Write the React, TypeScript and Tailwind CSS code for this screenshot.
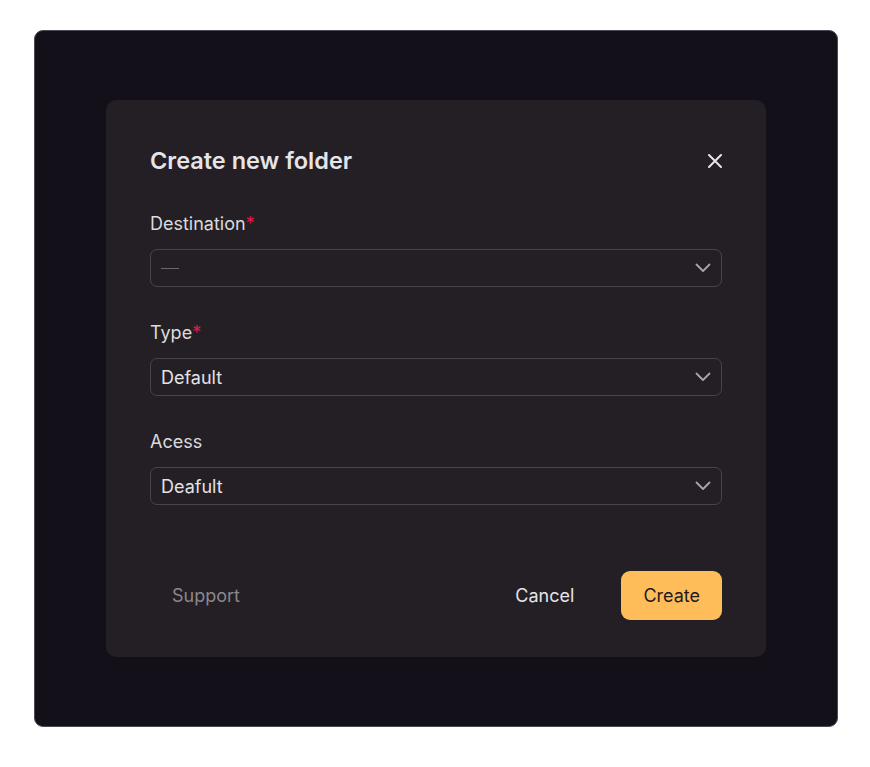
function Chevron() {
  return (
    <svg width="16" height="10" viewBox="0 0 16 10" fill="none" className="text-[#a9a6ab]">
      <path d="M1.5 1.5l6.5 6.5 6.5-6.5" stroke="currentColor" strokeWidth="1.8" strokeLinecap="round" strokeLinejoin="round" />
    </svg>
  );
}

function Field({ label, required, value, placeholder }: { label: string; required?: boolean; value?: string; placeholder?: boolean }) {
  return (
    <div className="flex flex-col gap-[12px]">
      <label className="text-[18px] leading-[26px] text-[#dcdadd]">
        {label}
        {required && <span className="text-[#e3174f]">*</span>}
      </label>
      <div className="flex h-[38px] items-center justify-between rounded-[7px] border border-[#48444c] pl-[10px] pr-[10px]">
        {placeholder ? (
          <span className="block h-px w-[18px] bg-[#6b676e]" />
        ) : (
          <span className="text-[18px] text-[#e4e2e5]">{value}</span>
        )}
        <Chevron />
      </div>
    </div>
  );
}

export default function App() {
  return (
    <div className="min-h-screen bg-white pt-[30px] pl-[34px] pr-[32px] font-['Inter',sans-serif]">
      <div className="flex h-[697px] items-start rounded-[9px] border border-[#4e4a55] bg-[#141019] px-[71px] pt-[69px]">
        <div className="w-full rounded-[10px] bg-[#231f25] px-[44px] pt-[47px] pb-[37px]">
          {/* Header */}
          <div className="flex items-center justify-between">
            <h2 className="text-[23.5px] font-semibold leading-7 text-[#e6e4e7]">Create new folder</h2>
            <svg width="14" height="14" viewBox="0 0 14 14" fill="none" className="text-[#e6e4e7]">
              <path d="M1 1l12 12M13 1L1 13" stroke="currentColor" strokeWidth="2" strokeLinecap="round" />
            </svg>
          </div>

          {/* Fields */}
          <div className="mt-[36px] flex flex-col gap-[33px]">
            <Field label="Destination" required placeholder />
            <Field label="Type" required value="Default" />
            <Field label="Acess" value="Deafult" />
          </div>

          {/* Footer */}
          <div className="mt-[66px] flex items-center justify-between">
            <button className="h-[49px] px-[22px] text-[18px] text-[#8a878d]">Support</button>
            <div className="flex items-center gap-[26px]">
              <button className="h-[49px] px-[21px] text-[18px] text-[#e6e4e7]">Cancel</button>
              <button className="h-[49px] rounded-[9px] bg-[#ffbd59] px-[22px] text-[18px] text-[#1d1a1f]">Create</button>
            </div>
          </div>
        </div>
      </div>
    </div>
  );
}
